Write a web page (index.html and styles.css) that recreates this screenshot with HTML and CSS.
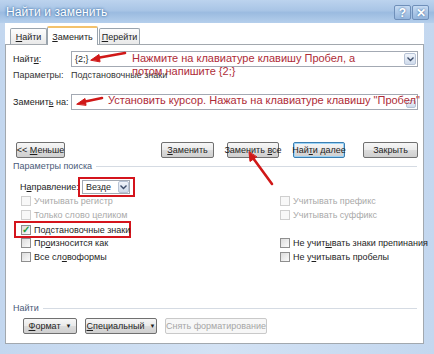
FILE: index.html
```html
<!DOCTYPE html>
<html lang="ru">
<head>
  <meta charset="UTF-8">
  <title>Найти и заменить</title>
  <link rel="stylesheet" href="styles.css">
</head>
<body>
  <div class="window">
    <!-- TITLE BAR -->
    <div class="titlebar">
      <span class="title">Найти и заменить</span>
      <div class="caption-buttons">
        <span class="cap-btn">?</span>
        <span class="cap-btn">✕</span>
      </div>
    </div>

    <div class="dialog">
      <!-- TABS -->
      <div class="tabs">
        <div class="tab tab-find"><span><u>Н</u>айти</span></div>
        <div class="tab tab-active"><span><u>З</u>аменить</span></div>
        <div class="tab tab-go"><span><u>П</u>ерейти</span></div>
      </div>

      <div class="panel">
        <div class="field-row find-row">
          <label class="field-label">Найт<u>и</u>:</label>
          <div class="input">
            <span class="input-text">{2;}</span>
            <span class="drop-btn">
              <svg width="7" height="5" viewBox="0 0 7 5"><path d="M0.5 0.5 L3.5 3.5 L6.5 0.5" fill="none" stroke="#3d4d6a" stroke-width="1.4"/></svg>
            </span>
          </div>
        </div>
        <div class="field-row params-row">
          <span class="field-label">Параметры:</span>
          <span>Подстановочные знаки</span>
        </div>
        <div class="field-row replace-row">
          <label class="field-label">Заменит<u>ь</u> на:</label>
          <div class="input">
            <span class="input-text"></span>
            <span class="drop-btn small"></span>
          </div>
        </div>

        <div class="actions">
          <button class="btn btn-less"><span>&lt;&lt; <u>М</u>еньше</span></button>
          <div class="actions-right">
            <button class="btn btn-replace"><span><u>З</u>аменить</span></button>
            <button class="btn btn-all"><span>Заменить <u>в</u>се</span></button>
            <button class="btn btn-next btn-default"><span>Най<u>т</u>и далее</span></button>
            <button class="btn btn-close"><span>Закрыть</span></button>
          </div>
        </div>

        <div class="group-head"><span>Параметры поиска</span></div>

        <div class="direction">
          <span class="dir-label">Н<u>а</u>правление:</span>
          <div class="mark-box">
            <div class="select">
              <span>Везде</span>
              <span class="select-btn">
                <svg width="7" height="5" viewBox="0 0 7 5"><path d="M0.5 0.5 L3.5 3.5 L6.5 0.5" fill="none" stroke="#3d4d6a" stroke-width="1.4"/></svg>
              </span>
            </div>
          </div>
        </div>

        <div class="checks">
          <div class="check disabled"><span class="box"></span><span>Учитывать регистр</span></div>
          <div class="check disabled"><span class="box"></span><span>Учитывать префикс</span></div>
          <div class="check disabled"><span class="box"></span><span>Только слово целиком</span></div>
          <div class="check disabled"><span class="box"></span><span>Учитывать суффикс</span></div>
          <div class="check marked"><span class="box checked">✓</span><span>Подстановочные знаки</span></div>
          <div></div>
          <div class="check"><span class="box"></span><span>Пр<u>о</u>износится как</span></div>
          <div class="check"><span class="box"></span><span>Не учит<u>ы</u>вать знаки препинания</span></div>
          <div class="check"><span class="box"></span><span>Все сл<u>о</u>воформы</span></div>
          <div class="check"><span class="box"></span><span>Не у<u>ч</u>итывать пробелы</span></div>
        </div>

        <div class="group-head find-head"><span>Найти</span></div>

        <div class="bottom-buttons">
          <button class="btn btn-format"><span><u>Ф</u>ормат</span><span class="caret">▼</span></button>
          <button class="btn btn-special"><span><u>С</u>пециальный</span><span class="caret">▼</span></button>
          <button class="btn btn-clear" disabled><span>Снять форматирование</span></button>
        </div>
      </div>
    </div>

    <!-- Red annotations pasted over the dialog -->
    <div class="note note-find">Нажмите на клавиатуре клавишу Пробел, а<br>потом напишите {2;}</div>
    <div class="note note-replace">Установить курсор. Нажать на клавиатуре клавишу "Пробел"</div>
    <svg class="arrows" width="434" height="354" viewBox="0 0 434 354">
      <g stroke="#d01818" stroke-width="2.6" stroke-linecap="round" fill="#d01818">
        <line x1="125" y1="53" x2="97" y2="58"/>
        <path d="M91 60 L99 54.5 L100 61.5 Z" stroke-width="1"/>
        <line x1="102" y1="98" x2="83" y2="102"/>
        <path d="M77 104 L85 98.5 L86 105 Z" stroke-width="1"/>
        <line x1="272" y1="184" x2="253" y2="158"/>
        <path d="M249 152 L250 161.5 L256.5 157 Z" stroke-width="1"/>
      </g>
    </svg>
  </div>
</body>
</html>
```

FILE: styles.css
```css
* {
  margin: 0;
  padding: 0;
  box-sizing: border-box;
}
body {
  font-family: 'Liberation Sans', Arial, sans-serif;
  font-size: 9px;
  color: #1e1e1e;
  background: #fff;
  white-space: nowrap;
}
u {
  text-decoration: underline;
  text-underline-offset: 1px;
}
/* Window frame */
.window {
  position: relative;
  width: 434px;
  height: 354px;
  background: linear-gradient(to right, #c3d7ef, #d3e2f4 50%, #c3d7ef);
  padding: 0 10px 10px 5px;
  overflow: hidden;
}
.titlebar {
  height: 23px;
  margin: 0 -10px 0 -5px;
  padding: 0 5px 0 6px;
  display: flex;
  align-items: center;
  justify-content: space-between;
  background: linear-gradient(to bottom, #bcd3ee 0%, #a9c5e6 45%, #9bbbe0 55%, #b5cfec 100%);
}
.title {
  font-size: 12px;
  color: #fff;
  letter-spacing: 0.1px;
  text-shadow: 0 0 3px #3a6ea5, 0 0 2px #5a86b8;
  padding-top: 1px;
}
.caption-buttons {
  display: flex;
  gap: 1px;
  margin-top: 2px;
}
.cap-btn {
  width: 17px;
  height: 15px;
  display: flex;
  align-items: center;
  justify-content: center;
  border: 1px solid #6f8fb9;
  border-radius: 2px;
  background: linear-gradient(to bottom, #c6dbf3, #94b5dc);
  color: #fff;
  font-size: 12px;
  font-weight: bold;
  text-shadow: 0 0 2px #2f5d92;
}
/* Dialog body */
.dialog {
  height: 321px;
  background: #fff;
  display: flex;
  flex-direction: column;
}
.tabs {
  height: 21px;
  display: flex;
  align-items: flex-end;
  padding-left: 5px;
}
.tab {
  height: 16px;
  display: flex;
  align-items: center;
  justify-content: center;
  border: 1px solid #9aa4ad;
  border-bottom: none;
  border-radius: 2px 2px 0 0;
  background: linear-gradient(to bottom, #fdfdfd, #e9e9e9);
}
.tab-find {
  width: 37px;
}
.tab-active {
  width: 51px;
  height: 19px;
  margin-bottom: -1px;
  background: #fff;
  border-top: 2px solid #f3c26c;
  position: relative;
  z-index: 1;
}
.tab-go {
  width: 41px;
  margin-left: 1px;
}
.panel {
  height: 300px;
  border: 1px solid #a2a8ae;
  padding: 0 5px 0 7px;
  display: flex;
  flex-direction: column;
}
.field-row {
  display: flex;
  align-items: center;
}
.field-label {
  width: 58px;
  flex: none;
}
.find-row {
  margin-top: 6px;
}
.params-row {
  height: 14px;
  margin-top: 1px;
  color: #333;
}
.replace-row {
  margin-top: 12px;
}
.input {
  flex: 1;
  height: 16px;
  border: 1px solid #a3a9b3;
  display: flex;
  align-items: center;
  justify-content: space-between;
  padding-left: 3px;
  background: #fff;
}
.drop-btn {
  width: 12px;
  height: 12px;
  margin-right: 1px;
  display: flex;
  align-items: center;
  justify-content: center;
  border: 1px solid #b7c3d6;
  border-radius: 2px;
  background: linear-gradient(to bottom, #f0f4fa, #cfdbeb);
}
.drop-btn.small {
  width: 10px;
  height: 8px;
  align-self: flex-end;
  margin-bottom: 1px;
}
/* Buttons */
.btn {
  height: 16px;
  font-family: inherit;
  font-size: 9px;
  color: #1e1e1e;
  border: 1px solid #707070;
  border-radius: 2px;
  background: linear-gradient(to bottom, #f6f6f6 0%, #eaeaea 50%, #dcdcdc 51%, #cfcfcf 100%);
  display: flex;
  align-items: center;
  justify-content: center;
}
.btn-default {
  border-color: #3c7fb1;
  box-shadow: inset 0 0 0 1px #9bd3f7;
}
.actions {
  margin-top: 32px;
  display: flex;
  justify-content: space-between;
}
.btn-less {
  width: 49px;
  margin-left: 3px;
}
.actions-right {
  display: flex;
}
.btn-replace {
  width: 53px;
}
.btn-all {
  width: 52px;
  margin-left: 13px;
}
.btn-next {
  width: 52px;
  margin-left: 14px;
}
.btn-close {
  width: 55px;
  margin-left: 18px;
}
/* Group headings */
.group-head {
  height: 14px;
  margin-top: 1px;
  display: flex;
  align-items: center;
  color: #4a5a78;
}
.group-head::after {
  content: '';
  flex: 1;
  height: 1px;
  margin-left: 4px;
  margin-right: 1px;
  background: #d5dbe3;
}
.find-head {
  margin-top: 37px;
}
/* Direction */
.direction {
  margin-top: 5px;
  height: 18px;
  display: flex;
  align-items: center;
  padding-left: 7px;
}
.dir-label {
  width: 58px;
}
.mark-box {
  border: 2px solid #d4141c;
  padding: 1px 3px 1px 2px;
}
.select {
  width: 48px;
  height: 14px;
  border: 1px solid #a3a9b3;
  display: flex;
  align-items: center;
  justify-content: space-between;
  padding-left: 3px;
}
.select-btn {
  width: 11px;
  height: 12px;
  display: flex;
  align-items: center;
  justify-content: center;
  border: 1px solid #b7c3d6;
  border-radius: 2px;
  background: linear-gradient(to bottom, #f0f4fa, #cfdbeb);
}
/* Checkboxes */
.checks {
  margin-top: -2px;
  display: grid;
  grid-template-columns: 259px 1fr;
  grid-auto-rows: 14px;
  padding-left: 8px;
}
.check {
  display: flex;
  align-items: center;
  gap: 3px;
}
.check.marked {
  width: 117px;
  margin-left: -7px;
  padding-left: 5px;
  border: 2px solid #d4141c;
  height: 17px;
  margin-top: -1px;
}
.box {
  width: 10px;
  height: 10px;
  flex: none;
  border: 1px solid #8f8f8f;
  background: linear-gradient(135deg, #dcdcdc, #fbfbfb);
  display: flex;
  align-items: center;
  justify-content: center;
  font-size: 10px;
  font-weight: bold;
  color: #22a03c;
}
.check.disabled {
  color: #a9a9a9;
}
.check.disabled .box {
  border-color: #cfcfcf;
  background: #f8f8f8;
}
/* Bottom row */
.bottom-buttons {
  margin-top: 3px;
  display: flex;
  gap: 8px;
  padding-left: 10px;
}
.btn-format {
  width: 54px;
}
.btn-special {
  width: 72px;
}
.btn-clear {
  width: 102px;
  color: #a6a6a6;
  border-color: #c9c9c9;
  background: #f7f7f7;
}
.caret {
  font-size: 6px;
  margin-left: 5px;
}
/* Annotations */
.note {
  position: absolute;
  font-size: 11px;
  line-height: 13px;
  color: #ae2c38;
}
.note-find {
  left: 132px;
  top: 52px;
}
.note-replace {
  left: 108px;
  top: 94px;
}
.arrows {
  position: absolute;
  left: 0;
  top: 0;
  pointer-events: none;
}
```
